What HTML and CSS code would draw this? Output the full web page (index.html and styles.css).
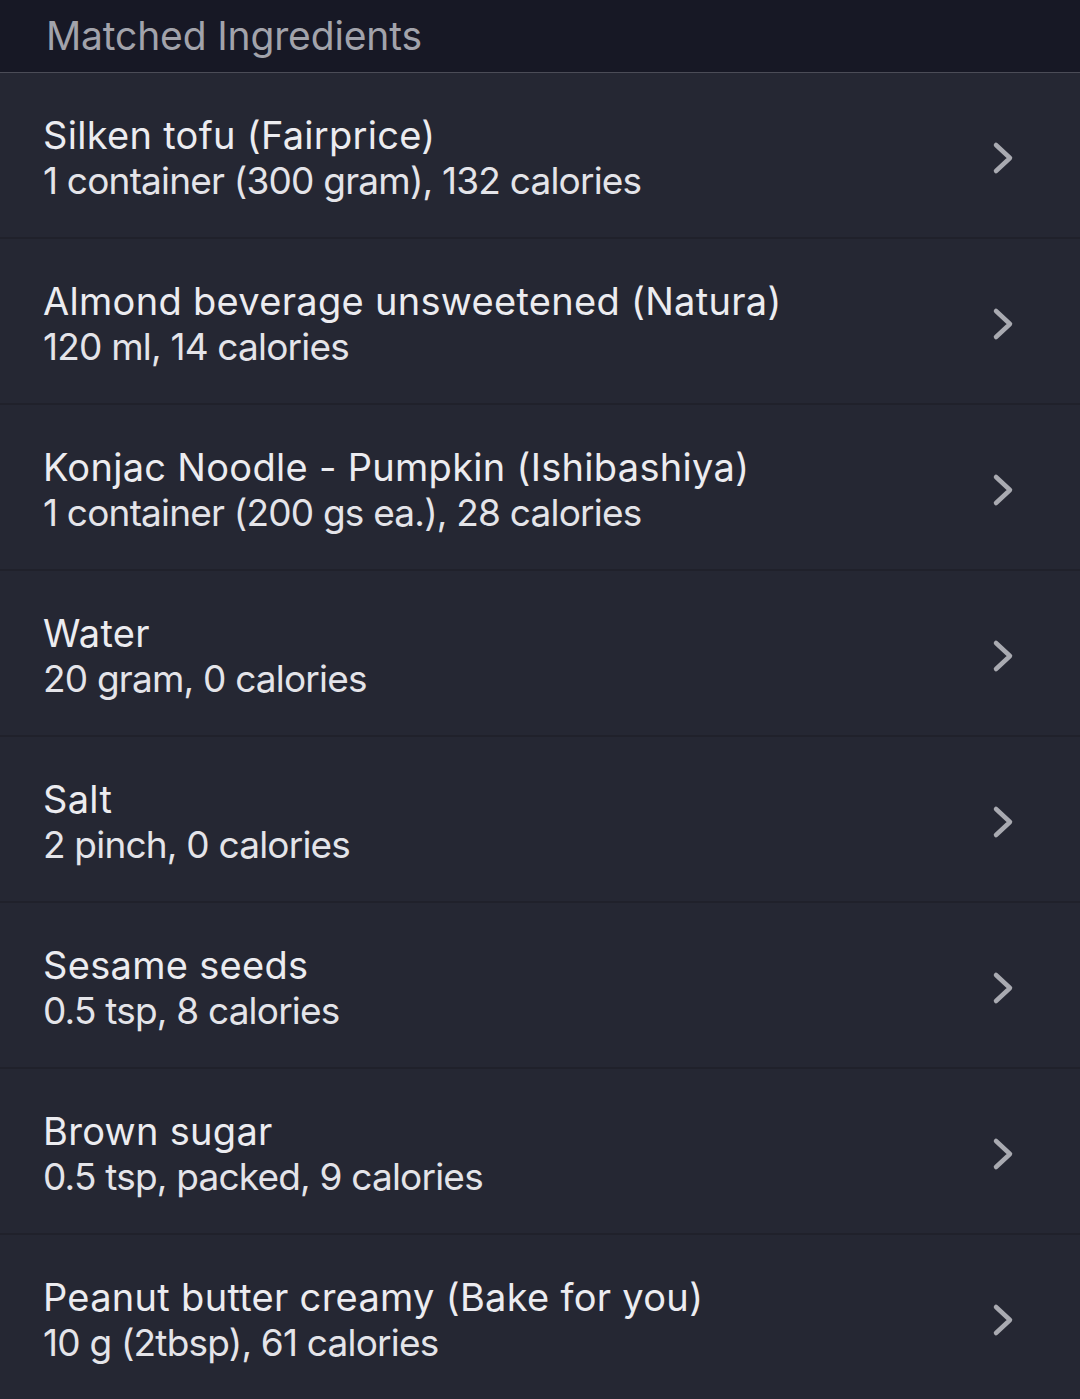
FILE: index.html
```html
<!DOCTYPE html>
<html>
<head>
<meta charset="utf-8">
<link rel="stylesheet" href="styles.css">
</head>
<body>
<div class="header">Matched Ingredients</div>
<ul class="list">
  <li class="row"><div class="text"><div class="title">Silken tofu (Fairprice)</div><div class="sub">1 container (300 gram), 132 calories</div></div><svg class="chev" viewBox="0 0 24 34"><path d="M4 4 L18 17 L4 30"/></svg></li>
  <li class="row"><div class="text"><div class="title">Almond beverage unsweetened (Natura)</div><div class="sub">120 ml, 14 calories</div></div><svg class="chev" viewBox="0 0 24 34"><path d="M4 4 L18 17 L4 30"/></svg></li>
  <li class="row"><div class="text"><div class="title">Konjac Noodle - Pumpkin (Ishibashiya)</div><div class="sub">1 container (200 gs ea.), 28 calories</div></div><svg class="chev" viewBox="0 0 24 34"><path d="M4 4 L18 17 L4 30"/></svg></li>
  <li class="row"><div class="text"><div class="title">Water</div><div class="sub">20 gram, 0 calories</div></div><svg class="chev" viewBox="0 0 24 34"><path d="M4 4 L18 17 L4 30"/></svg></li>
  <li class="row"><div class="text"><div class="title">Salt</div><div class="sub">2 pinch, 0 calories</div></div><svg class="chev" viewBox="0 0 24 34"><path d="M4 4 L18 17 L4 30"/></svg></li>
  <li class="row"><div class="text"><div class="title">Sesame seeds</div><div class="sub">0.5 tsp, 8 calories</div></div><svg class="chev" viewBox="0 0 24 34"><path d="M4 4 L18 17 L4 30"/></svg></li>
  <li class="row"><div class="text"><div class="title">Brown sugar</div><div class="sub">0.5 tsp, packed, 9 calories</div></div><svg class="chev" viewBox="0 0 24 34"><path d="M4 4 L18 17 L4 30"/></svg></li>
  <li class="row"><div class="text"><div class="title">Peanut butter creamy (Bake for you)</div><div class="sub">10 g (2tbsp), 61 calories</div></div><svg class="chev" viewBox="0 0 24 34"><path d="M4 4 L18 17 L4 30"/></svg></li>
</ul>
</body>
</html>
```
FILE: styles.css
```css
html, body {
  margin: 0;
  padding: 0;
  background: #252733;
  font-family: Inter, "Noto Sans", sans-serif;
}
.header {
  height: 73px;
  box-sizing: border-box;
  background: #171825;
  color: #a2a3ab;
  font-size: 39px;
  line-height: 72px;
  padding-left: 46px;
  border-bottom: 1px solid #4b4c57;
  letter-spacing: -0.15px;
}
.list {
  list-style: none;
  margin: 0;
  padding: 0;
}
.row {
  height: 166px;
  box-sizing: border-box;
  display: flex;
  align-items: center;
  justify-content: space-between;
  padding: 6px 64px 0 43px;
  border-bottom: 2px solid #20212b;
  background: #252733;
}
.text {
  display: flex;
  flex-direction: column;
}
.title {
  color: #ececf0;
  font-size: 38px;
  line-height: 45px;
  letter-spacing: 0.3px;
}
.sub {
  color: #e4e4e9;
  font-size: 37px;
  line-height: 45px;
  letter-spacing: -0.8px;
}
.chev {
  width: 24px;
  height: 34px;
  fill: none;
  stroke: #a9aab1;
  stroke-width: 4.5;
  stroke-linecap: round;
  stroke-linejoin: round;
}
```
